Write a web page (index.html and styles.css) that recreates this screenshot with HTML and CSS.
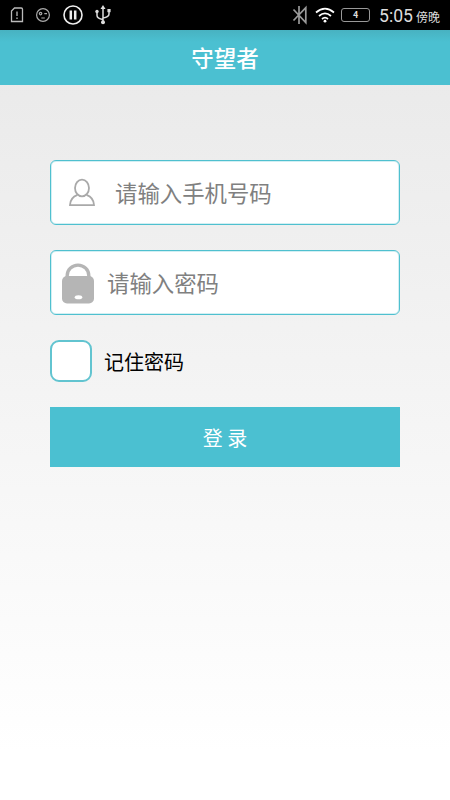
FILE: index.html
```html
<!DOCTYPE html>
<html lang="zh-CN">
<head>
<meta charset="utf-8">
<title>守望者</title>
<link rel="stylesheet" href="styles.css">
</head>
<body>
<div class="statusbar">
  <div class="status-left">
    <svg class="sim" width="14" height="16" viewBox="0 0 14 16" fill="none" stroke="#bbb" stroke-width="1.3"><path d="M4.5 1H11.2Q12.5 1 12.5 2.3V14.5H1.5V4Z"/><path d="M7 4.5V9M7 10.5V12"/></svg>
    <svg class="face" width="16" height="16" viewBox="0 0 16 16" fill="none" stroke="#aaa" stroke-width="1.2"><circle cx="8" cy="8" r="6.4"/><circle cx="5.6" cy="6.6" r="1.2"/><path d="M9.3 6.7H12M6.3 11H9.8"/></svg>
    <svg class="pause" width="22" height="22" viewBox="0 0 22 22" fill="none" stroke="#eee"><circle cx="11" cy="11" r="9" stroke-width="1.6"/><path d="M8.8 6.5V15.5M13.2 6.5V15.5" stroke-width="2.5"/></svg>
    <svg class="usb" width="18" height="20" viewBox="0 0 18 20" fill="none" stroke="#ddd" stroke-width="1.5"><path d="M9 3V17M9 14.5Q3 13.5 3 10.5V7M9 13Q15 12 15 9V6"/><path d="M9 0L11.5 4H6.5Z" fill="#ddd" stroke="none"/><circle cx="9" cy="17.3" r="2" fill="#ddd" stroke="none"/><circle cx="3" cy="6.5" r="1.7" fill="#ddd" stroke="none"/><path d="M13.4 4H16.6V7.2H13.4Z" fill="#ddd" stroke="none"/></svg>
  </div>
  <div class="status-right">
    <svg class="bluetooth" width="16" height="20" viewBox="0 0 16 20" fill="none" stroke="#999" stroke-width="1.7"><path d="M7 1V19M1.5 4.5L13.8 17.5V2.6L1.5 15.5"/></svg>
    <svg class="wifi" width="20" height="16" viewBox="0 0 20 16" fill="none" stroke="#fff" stroke-width="1.7"><path d="M1 5.5Q10-2.2 19 5.5M4 9Q10 3.8 16 9M7 12Q10 9.4 13 12"/><circle cx="10" cy="14.2" r="1.4" fill="#fff" stroke="none"/></svg>
    <div class="battery">4</div>
    <span class="time">5:05</span><span class="period">傍晚</span>
  </div>
</div>
<header class="titlebar">守望者</header>
<main class="login">
  <div class="field phone">
    <svg width="28" height="30" viewBox="0 0 28 30" fill="none" stroke="#a9a9a9" stroke-width="1.8"><ellipse cx="14" cy="10" rx="7" ry="8.4"/><path d="M9.5 16.8Q2.2 19.5 2 27.1H26Q25.8 19.5 18.5 16.8"/></svg>
    <span>请输入手机号码</span>
  </div>
  <div class="field password">
    <svg width="32" height="41" viewBox="0 0 32 41"><path d="M5.2 15V12.5A10.8 10.4 0 0 1 26.8 12.5V15" fill="none" stroke="#b5b5b5" stroke-width="3.4"/><rect y="13" width="32" height="27.5" rx="5" fill="#b5b5b5"/><ellipse cx="16.5" cy="34.2" rx="3.8" ry="2" fill="#fff"/></svg>
    <span>请输入密码</span>
  </div>
  <div class="remember"><i class="checkbox"></i><span>记住密码</span></div>
  <div class="submit">登 录</div>
</main>
</body>
</html>
```

FILE: styles.css
```css
* { box-sizing: border-box; }
body {
  margin: 0;
  height: 800px;
  overflow: hidden;
  font-family: "Noto Sans CJK SC", sans-serif;
  background: linear-gradient(#e8e8e8, #fff 94%);
}
svg { display: block; flex: none; }
.statusbar {
  display: flex;
  justify-content: space-between;
  height: 30px;
  background: #000;
  color: #ddd;
}
.status-left, .status-right { display: flex; align-items: center; }
.status-left { padding-left: 10px; }
.face { margin-left: 11px; }
.pause { margin-left: 11px; }
.usb { margin-left: 10px; }
.status-right { padding-right: 10px; }
.wifi { margin-left: 7px; }
.battery {
  width: 29px;
  height: 14px;
  margin-left: 6px;
  border: 1px solid #999;
  border-radius: 3px;
  font: bold 9px/12px Roboto, sans-serif;
  text-align: center;
}
.time { margin-left: 9px; padding-top: 1px; font: 17.6px/30px Roboto, sans-serif; }
.period { margin-left: 3px; padding-top: 3px; font-size: 12px; line-height: 28px; }
.titlebar {
  height: 55px;
  background: linear-gradient(#48b2c1, #4bc0d1 12px);
  color: #fff;
  font-size: 22.5px;
  font-weight: 500;
  line-height: 55px;
  text-align: center;
}
.login { padding: 75px 50px 0; }
.field {
  display: flex;
  align-items: center;
  height: 65px;
  margin-bottom: 25px;
  border: 1px solid #4fc0cf;
  border-radius: 6px;
  background: #fff;
  box-shadow: inset 0 0 0 1px #d3eff3;
  color: #808080;
  font-size: 22.4px;
  line-height: 32px;
}
.field svg { margin-top: 1px; }
.field span { padding-bottom: 1px; }
.phone { padding-left: 17px; }
.phone span { margin-left: 19px; }
.password { padding-left: 11px; }
.password span { margin-left: 13px; }
.remember {
  display: flex;
  align-items: center;
  height: 42px;
  color: #000;
  font-size: 20px;
}
.checkbox {
  width: 42px;
  height: 42px;
  margin-right: 12px;
  border: 2px solid #62c4d0;
  border-radius: 9px;
  background: #fff;
}
.submit {
  height: 60px;
  margin-top: 25px;
  background: #4bc0d1;
  color: #fff;
  font-size: 20px;
  line-height: 61px;
  text-align: center;
}
```
